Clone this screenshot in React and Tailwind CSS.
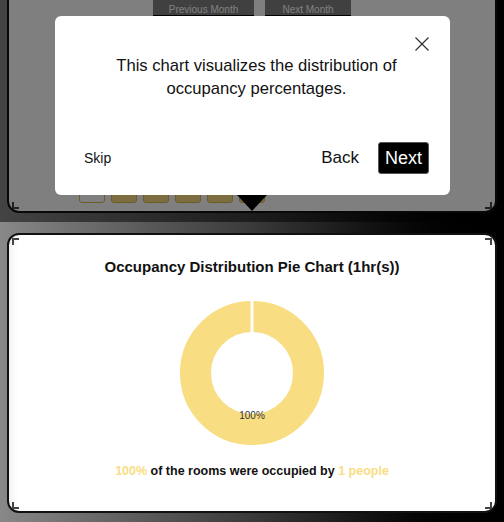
import React from 'react';

const Corner = ({ pos }) => {
  const cls = {
    tl: 'left-[3px] top-[3px] border-l-2 border-t-2',
    tr: 'right-[3px] top-[3px] border-r-2 border-t-2',
    bl: 'left-[3px] bottom-[2px] border-l-2 border-b-2',
    br: 'right-[3px] bottom-[2px] border-r-2 border-b-2',
  }[pos];
  return <span className={`absolute w-[7px] h-[7px] border-[#444] ${cls}`} />;
};

const Donut = () => (
  <svg width="146" height="146" viewBox="0 0 146 146">
    <circle cx="73" cy="73" r="56.5" fill="none" stroke="#f8dd82" strokeWidth="31" />
    <line x1="73" y1="0" x2="73" y2="34" stroke="#fff" strokeWidth="3" />
    <text x="73" y="119" textAnchor="middle" fontSize="10" fill="#333" fontFamily="Liberation Sans, Arial, sans-serif">
      100%
    </text>
  </svg>
);

export default function App() {
  return (
    <div className="relative w-[504px] h-[522px] overflow-hidden bg-linear-to-r from-[#888] via-[#3a3a3a] to-black font-['Liberation_Sans',Arial,sans-serif]">
      {/* Previous step card (dimmed) */}
      <div className="relative mx-[7px] -mt-[40px] h-[253px] flex flex-col justify-between pt-[29px] pb-[8px] bg-white border-2 border-[#111] rounded-[12px]">
        <div className="flex justify-center gap-[11px]">
          <button className="w-[101px] h-[24px] pt-[11px] bg-[#808080] text-white text-[10px] shadow-[0_2px_0_#000]">Previous Month</button>
          <button className="w-[86px] h-[24px] pt-[11px] bg-[#808080] text-white text-[10px] shadow-[0_2px_0_#000]">Next Month</button>
        </div>
        <div className="flex gap-[6px] pl-[70px]">
          <span className="w-[26px] h-[20px] rounded-[3px] border border-[#d9b84f] bg-white" />
          <span className="w-[26px] h-[20px] rounded-[3px] border border-[#d9b84f] bg-[#f8dd82]" />
          <span className="w-[26px] h-[20px] rounded-[3px] border border-[#d9b84f] bg-[#f8dd82]" />
          <span className="w-[26px] h-[20px] rounded-[3px] border border-[#d9b84f] bg-[#f8dd82]" />
          <span className="w-[26px] h-[20px] rounded-[3px] border border-[#d9b84f] bg-[#f8dd82]" />
          <span className="w-[26px] h-[20px] rounded-[3px] border border-[#d9b84f] bg-[#f8dd82]" />
        </div>
        <Corner pos="bl" />
        <Corner pos="br" />
      </div>

      {/* Highlighted chart card */}
      <div className="relative mx-[7px] mt-[20px] h-[280px] flex flex-col items-center pt-[23px] bg-white border-2 border-[#111] rounded-[12px] shadow-[inset_8px_0_8px_-6px_rgba(0,0,0,0.08)]">
        <h2 className="text-[15px] leading-[18px] font-bold text-[#111]">Occupancy Distribution Pie Chart (1hr(s))</h2>
        <div className="mt-[24px]">
          <Donut />
        </div>
        <p className="mt-[17px] text-[12.5px] leading-[16px] font-semibold text-[#111]">
          <span className="text-[#f8dd82]">100%</span> of the rooms were occupied by{' '}
          <span className="text-[#f8dd82]">1 people</span>
        </p>
        <Corner pos="tl" />
        <Corner pos="tr" />
        <Corner pos="bl" />
        <Corner pos="br" />
      </div>

      {/* Tour overlay */}
      <div className="absolute left-0 top-0 w-full h-[222px] bg-black/50" />

      <div className="absolute left-[55px] top-[16px] w-[395px] h-[179px] z-10 flex flex-col justify-between bg-white rounded-[6px] pt-[38px] pb-[21px] pl-[29px] pr-[21px]">
        <button className="absolute right-[21px] top-[21px] w-[14px] h-[14px]">
          <svg width="14" height="14" viewBox="0 0 14 14">
            <path d="M0.5 0.5 L13.5 13.5 M13.5 0.5 L0.5 13.5" stroke="#333" strokeWidth="1.2" />
          </svg>
        </button>
        <p className="px-[12px] text-center text-[16.6px] leading-[23px] text-[#111]">
          This chart visualizes the distribution of occupancy percentages.
        </p>
        <div className="flex items-center">
          <button className="text-[14px] text-[#111]">Skip</button>
          <button className="ml-auto text-[17px] text-[#111]">Back</button>
          <button className="ml-[19px] w-[51px] h-[32px] bg-black text-white text-[18px] rounded-[3px] border border-[#555]">Next</button>
        </div>
      </div>
      <div className="absolute left-[237px] top-[195px] z-10 w-0 h-0 border-x-[15px] border-x-transparent border-t-[16px] border-t-black" />
    </div>
  );
}
